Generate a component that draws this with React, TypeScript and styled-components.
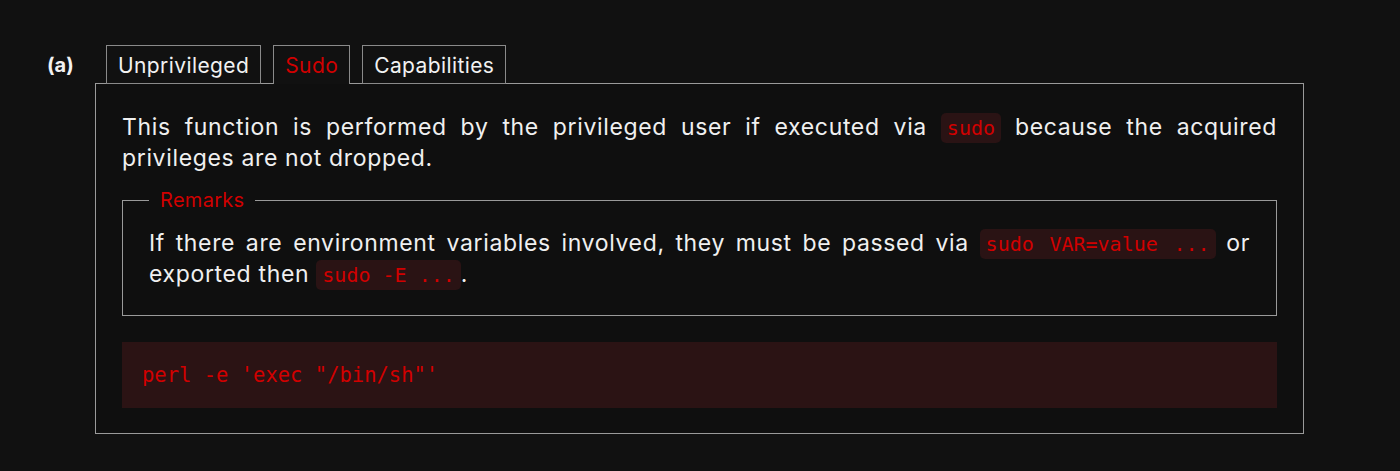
import styled, { createGlobalStyle } from "styled-components";

const GlobalStyle = createGlobalStyle`
  html, body {
    margin: 0;
    padding: 0;
    background: #111111;
  }
  body {
    font-family: Inter, "Noto Sans", sans-serif;
    color: #eeeeee;
  }
`;

const Page = styled.div`
  display: flex;
  flex-direction: row;
  align-items: flex-start;
  padding: 45px 96px 36px 47px;
  min-height: 471px;
  box-sizing: border-box;
`;

const Label = styled.div`
  width: 48px;
  flex: none;
  font-size: 20px;
  font-weight: 700;
  line-height: 40px;
  color: #f2f2f2;
`;

const Figure = styled.div`
  flex: 1;
  display: flex;
  flex-direction: column;
`;

const TabRow = styled.div`
  display: flex;
  flex-direction: row;
  gap: 12px;
  padding-left: 11px;
  position: relative;
  z-index: 1;
`;

const Tab = styled.div<{ $active?: boolean }>`
  height: 39px;
  box-sizing: border-box;
  padding: 0 11px;
  border: 1px solid #8a8a8a;
  border-bottom: ${({ $active }) => ($active ? "none" : "1px solid #8a8a8a")};
  margin-bottom: -1px;
  background: #111111;
  font-size: 21px;
  letter-spacing: 0.4px;
  line-height: 39px;
  color: ${({ $active }) => ($active ? "#d10000" : "#f2f2f2")};
`;

const Panel = styled.div`
  border: 1px solid #9a9a9a;
  background: #0f0f0f;
  padding: 28px 26px 25px;
  display: flex;
  flex-direction: column;
`;

const Para = styled.p`
  margin: 0;
  font-size: 23px;
  letter-spacing: 0.65px;
  line-height: 30px;
  text-align: justify;
  color: #f0f0f0;
`;

const Code = styled.code`
  font-family: "DejaVu Sans Mono", "Liberation Mono", monospace;
  font-size: 20px;
  letter-spacing: 0;
  color: #d10000;
  background: #2a1314;
  border-radius: 5px;
  padding: 3px 6px;
`;

const Remarks = styled.fieldset`
  margin: 15px 0 0;
  border: 1px solid #9a9a9a;
  padding: 16px 26px 25px;
  min-width: 0;
`;

const Legend = styled.legend`
  padding: 0 11px;
  font-size: 20px;
  letter-spacing: 0.3px;
  line-height: 24px;
  color: #d10000;
`;

const CodeBlock = styled.pre`
  margin: 26px 0 0;
  background: #2b1314;
  padding: 0 20px;
  height: 66px;
  display: flex;
  align-items: center;
  font-family: "DejaVu Sans Mono", "Liberation Mono", monospace;
  font-size: 20.5px;
  color: #d10000;
`;

export default function App() {
  return (
    <>
      <GlobalStyle />
      <Page>
        <Label>(a)</Label>
        <Figure>
          <TabRow>
            <Tab>Unprivileged</Tab>
            <Tab $active>Sudo</Tab>
            <Tab>Capabilities</Tab>
          </TabRow>
          <Panel>
            <Para>
              This function is performed by the privileged user if executed via <Code>sudo</Code> because
              the acquired privileges are not dropped.
            </Para>
            <Remarks>
              <Legend>Remarks</Legend>
              <Para>
                If there are environment variables involved, they must be passed via{" "}
                <Code>sudo VAR=value ...</Code> or exported then <Code>sudo -E ...</Code>.
              </Para>
            </Remarks>
            <CodeBlock>perl -e 'exec "/bin/sh"'</CodeBlock>
          </Panel>
        </Figure>
      </Page>
    </>
  );
}
